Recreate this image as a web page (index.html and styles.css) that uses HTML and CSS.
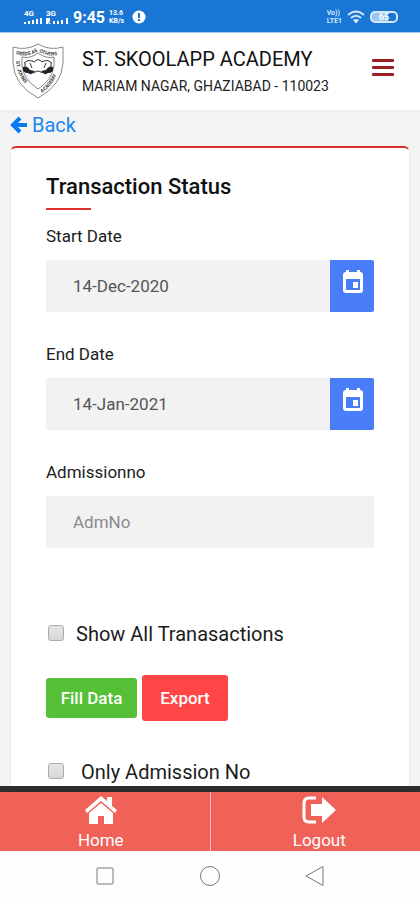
FILE: index.html
```html
<!DOCTYPE html>
<html lang="en">
<head>
<meta charset="utf-8">
<meta name="viewport" content="width=device-width, initial-scale=1">
<title>Transaction Status</title>
<link rel="stylesheet" href="styles.css">
</head>
<body>
<div class="statusbar">
  <div class="status-group">
    <div class="signal"><span>4G</span>
      <svg width="18" height="6" viewBox="0 0 18 6"><path d="M0 4h2v2H0zM4 3h2v3H4zM8 2h2v4H8zM12 1h2v5h-2zM16 0h2v6h-2z"/></svg>
    </div>
    <div class="signal"><span>3G</span>
      <svg width="23" height="6" viewBox="0 0 23 6"><path d="M0 0h4v3L3 4l2 2H3L2 4v2H0zM7 3h2v3H7zM11 3h2v3h-2zM15 2h2v4h-2zM20 0h2v6h-2z"/></svg>
    </div>
    <span class="clock">9:45</span>
    <div class="rate"><span>13.6</span><span>KB/s</span></div>
    <svg class="alert" width="14" height="14" viewBox="0 0 14 14"><circle cx="7" cy="7" r="6.5"/><path class="cut" d="M6 3h2v5H6zM6 9h2v2H6z"/></svg>
  </div>
  <div class="status-group right">
    <div class="rate"><span>Vo))</span><span>LTE1</span></div>
    <svg width="18" height="14" viewBox="0 0 18 14"><path class="wave" d="M1 5q8-7 16 0M4 8q5-4.500 10 0"/><path d="M6 10q3-2 6 0l-3 3.500z"/></svg>
    <div class="battery"><span>65</span></div>
  </div>
</div>

<header class="header">
  <svg class="crest" width="56" height="58" viewBox="0 0 56 58">
    <defs>
      <path id="arc-top" d="M6 11q12 4 22-3q10 7 24 3"/>
      <path id="arc-left" d="M6 18Q7 38 27 51"/>
      <path id="arc-right" d="M32 50Q49 37 50 17"/>
    </defs>
    <path class="line" d="M3 4q13 4 25-3q12 7 25 3v16q-1 22-25 35Q4 42 3 20z"/>
    <path class="line" d="M12 14q8 2 16-4q8 6 16 4v9q-2 14-16 23Q14 37 12 23z"/>
    <text><textPath href="#arc-top">DEEDS AS OTHERS</textPath></text>
    <text><textPath href="#arc-left">ST. JOHNS</textPath></text>
    <text><textPath href="#arc-right">ACADEMY</textPath></text>
    <path class="solid" d="M13 24q4-2 7 3l5 1q-3 5-7 2q-6 0-5-6zM43 24q-4-2-7 3l-5 1q3 5 7 2q6 0 5-6z"/>
    <path class="ink" d="M14 20q4-4 8-2l3 1M42 20q-4-4-8-2l-3 1M20 20l2 5m14-5l-2 5M25 18q3-3 6 0M24 30q4-4 8 0M15 20v5M41 20v5"/>
  </svg>
  <div class="school">
    <h1>ST. SKOOLAPP ACADEMY</h1>
    <p>MARIAM NAGAR, GHAZIABAD - 110023</p>
  </div>
  <button class="menu" type="button" aria-label="Menu"><i></i><i></i><i></i></button>
</header>

<main class="page">
  <a class="back" href="#">
    <svg width="18" height="18" viewBox="0 0 18 18"><path d="M10 2L3 9l7 7M3 9h14"/></svg>Back</a>
  <form class="card">
    <h2>Transaction Status</h2>
    <div class="field">
      <label for="start">Start Date</label>
      <div class="control"><input id="start" type="text" value="14-Dec-2020">
        <button type="button" aria-label="Pick start date"><svg width="22" height="24" viewBox="0 0 22 24"><path fill-rule="evenodd" d="M4 0h3v2h8V0h3v2q3 0 3 3v15q0 3-3 3H4q-3 0-3-3V5q0-3 3-3zM4 9v11h14V9zM11 12h5v6h-5z"/></svg></button>
      </div>
    </div>
    <div class="field">
      <label for="end">End Date</label>
      <div class="control"><input id="end" type="text" value="14-Jan-2021">
        <button type="button" aria-label="Pick end date"><svg width="22" height="24" viewBox="0 0 22 24"><path fill-rule="evenodd" d="M4 0h3v2h8V0h3v2q3 0 3 3v15q0 3-3 3H4q-3 0-3-3V5q0-3 3-3zM4 9v11h14V9zM11 12h5v6h-5z"/></svg></button>
      </div>
    </div>
    <div class="field">
      <label for="adm">Admissionno</label>
      <div class="control"><input id="adm" type="text" placeholder="AdmNo"></div>
    </div>
    <div class="check all"><input id="all" type="checkbox"><label for="all">Show All Tranasactions</label></div>
    <div class="actions">
      <button class="fill" type="button">Fill Data</button>
      <button class="export" type="button">Export</button>
    </div>
    <div class="check only"><input id="only" type="checkbox"><label for="only">Only Admission No</label></div>
  </form>
</main>

<nav class="tabs">
  <a href="#">
    <svg width="34" height="28" viewBox="0 0 34 28"><path d="M17 0l6 5V1h5v9l5 4-2 3L17 5 3 17l-2-3zM17 7l12 10v11h-9v-8h-6v8H5V17z"/></svg>
    Home</a>
  <a href="#">
    <svg width="34" height="28" viewBox="0 0 34 28"><path class="bracket" d="M14 2H7Q2 2 2 7v14q0 5 5 5h7"/><path d="M9 8h11V1l14 13-14 13v-7H9z"/></svg>
    Logout</a>
</nav>
<div class="system">
  <svg width="22" height="22" viewBox="0 0 22 22"><rect x="3" y="3" width="16" height="16" rx="1"/></svg>
  <svg width="22" height="22" viewBox="0 0 22 22"><circle cx="11" cy="11" r="9.500"/></svg>
  <svg width="22" height="22" viewBox="0 0 22 22"><path d="M19 1.500v19L2 11z"/></svg>
</div>
</body>
</html>
```
FILE: styles.css
```css
* { box-sizing: border-box; }
body {
  margin: 0;
  height: 100vh;
  display: flex;
  flex-direction: column;
  background: #f4f4f4;
  color: #1c1c1c;
  font-family: Roboto, "Liberation Sans", sans-serif;
  font-size: 17px;
}
h1, h2, p { margin: 0; }
button, input { font: inherit; border: 0; }
a { text-decoration: none; }
svg { display: block; flex: none; }

.statusbar {
  flex: none;
  display: flex;
  justify-content: space-between;
  height: 33px;
  padding: 2px 22px 0 24px;
  background: #1976d4;
  border-bottom: 1px solid #a9d2f5;
  color: #fff;
}
.status-group { display: flex; align-items: center; gap: 4px; }
.status-group.right { gap: 5px; color: #d5e8fb; }
.status-group svg { fill: currentColor; }
.signal { font-size: 8px; line-height: 8px; font-weight: 700; }
.clock { font-size: 16px; font-weight: 700; }
.rate {
  display: flex;
  flex-direction: column;
  font-size: 7px;
  line-height: 8px;
  font-weight: 700;
}
.alert { margin-left: 4px; }
.status-group .cut { fill: #1976d4; }
.status-group .wave { fill: none; stroke: currentColor; stroke-width: 2; }
.battery {
  width: 28px;
  height: 12px;
  border: 2px solid #d5e8fb;
  border-radius: 5px;
  background: linear-gradient(to right, #9cc6f0 65%, transparent 65%);
  font-size: 9px;
  line-height: 8px;
  font-weight: 700;
  text-align: center;
  color: #fff;
}

.header {
  flex: none;
  display: flex;
  height: 77px;
  padding: 10px 26px 0 10px;
  background: #fff;
  box-shadow: 0 1px 4px rgba(0, 0, 0, .06);
  z-index: 1;
}
.crest .line { fill: none; stroke: #888; stroke-width: 1; }
.crest .ink { fill: none; stroke: #333; stroke-width: 1; }
.crest .solid { fill: #222; }
.crest text { font-size: 5px; font-weight: 700; fill: #444; }
.school { flex: 1; padding: 4px 0 0 16px; white-space: nowrap; }
.school h1 { font-size: 20px; line-height: 24px; font-weight: 400; color: #111; }
.school p { margin-top: 6px; font-size: 14px; line-height: 18px; color: #222; }
.menu {
  align-self: flex-start;
  display: flex;
  flex-direction: column;
  gap: 4px;
  margin-top: 16px;
  padding: 0;
  background: none;
}
.menu i { width: 22px; height: 3px; border-radius: 1px; background: #9c1c24; }

.page { flex: 1; min-height: 0; overflow: hidden; padding: 0 10px; }
.back {
  display: flex;
  align-items: center;
  gap: 4px;
  height: 30px;
  font-size: 20px;
  color: #1a86ee;
}
.back svg { fill: none; stroke: #0879f5; stroke-width: 4; }
.card {
  margin-top: 6px;
  padding: 25px 35px 40px;
  background: #fff;
  border: 1px solid #ececec;
  border-top: 2px solid #d92f2c;
  border-radius: 6px;
}
.card h2 { font-size: 22px; line-height: 28px; font-weight: 500; color: #111; }
.card h2::after {
  content: "";
  display: block;
  width: 45px;
  height: 2px;
  margin: 7px 0 14px;
  background: #e03330;
}
.field { margin-bottom: 30px; }
.field label { display: block; height: 24px; margin-bottom: 12px; line-height: 24px; }
.control { display: flex; height: 52px; }
.control input {
  flex: 1;
  min-width: 0;
  padding: 0 27px;
  background: #f2f2f2;
  color: #555;
  border-radius: 1px;
}
.control input::placeholder { color: #8b8b8b; }
.control button {
  display: flex;
  justify-content: center;
  width: 44px;
  padding: 10px 0 0 2px;
  background: #4a7dfa;
  border-radius: 0 2px 2px 0;
}
.control svg { fill: #fff; }
.check { display: flex; align-items: center; height: 24px; font-size: 20px; }
.check input {
  appearance: none;
  flex: none;
  width: 16px;
  height: 16px;
  margin: 0 0 2px 2px;
  border: 1px solid #aaa;
  border-radius: 3px;
  background: linear-gradient(#e4e4e4, #d8d8d8);
}
.check label { margin-left: 12px; white-space: nowrap; }
.all { margin-top: 74px; }
.only { margin-top: 39px; }
.only label { margin-left: 17px; }
.actions { display: flex; align-items: center; gap: 5px; margin-top: 29px; }
.actions button { padding: 0; color: #fff; border-radius: 3px; font-size: 17px; font-weight: 500; }
.actions .fill { width: 91px; height: 40px; background: #55bf36; }
.actions .export { width: 86px; height: 46px; background: #ff4545; }

.tabs { flex: none; display: flex; height: 65px; border-top: 6px solid #2d2d2d; background: #f06258; }
.tabs a {
  flex: 1;
  display: flex;
  flex-direction: column;
  align-items: center;
  gap: 4px;
  padding: 4px 8px 0 0;
  color: #fff;
  font-size: 17px;
  line-height: 24px;
}
.tabs a + a { border-left: 1px solid #f9c4bf; padding-right: 0; padding-left: 8px; }
.tabs svg { fill: #fff; }
.tabs .bracket { fill: none; stroke: #fff; stroke-width: 3; }
.system {
  flex: none;
  display: flex;
  justify-content: center;
  align-items: center;
  gap: 83px;
  height: 49px;
  background: #fefefe;
}
.system svg { fill: none; stroke: #777; stroke-width: 1; }
```
